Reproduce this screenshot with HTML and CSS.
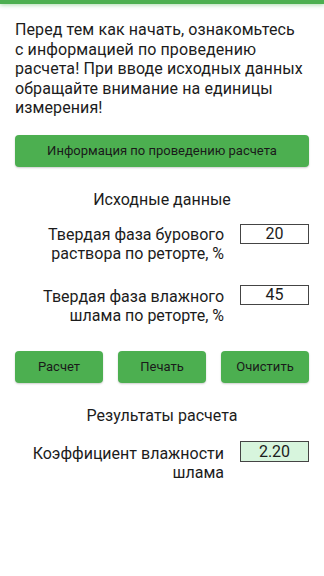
FILE: index.html
```html
<!DOCTYPE html>
<html>
<head>
    <title>Коэффициент влажности шлама</title>
    <link rel="stylesheet" href="styles.css">
</head>
<body>
    <div class="top-bar"></div>
    <div class="page">
        <p class="intro">Перед тем как начать, ознакомьтесь с информацией по проведению расчета! При вводе исходных данных обращайте внимание на единицы измерения!</p>

        <button class="btn btn-wide">Информация по проведению расчета</button>

        <h3 class="section-title">Исходные данные</h3>
        <div class="field-row">
            <label class="field-label" for="solidMud">Твердая фаза бурового раствора по реторте, %</label>
            <input id="solidMud" class="field-input" type="text" value="20">
        </div>
        <div class="field-row row-second">
            <label class="field-label" for="solidSlurry">Твердая фаза влажного шлама по реторте, %</label>
            <input id="solidSlurry" class="field-input" type="text" value="45">
        </div>

        <div class="actions">
            <button class="btn">Расчет</button>
            <button class="btn">Печать</button>
            <button class="btn">Очистить</button>
        </div>

        <h3 class="section-title results-title">Результаты расчета</h3>
        <div class="field-row result-row">
            <span class="field-label">Коэффициент влажности шлама</span>
            <span class="field-input result">2.20</span>
        </div>
    </div>
</body>
</html>
```

FILE: styles.css
```css
body {
    margin: 0;
    background-color: #ffffff;
    color: #1c1c1c;
    font-family: Roboto, "Noto Sans", sans-serif;
    font-size: 16px;
}
.top-bar {
    height: 4px;
    background-color: #4caf50;
    box-shadow: 0 1px 4px rgba(76,175,80,0.5);
}
.page {
    padding: 0 15px;
}
.intro {
    margin: 16px 0 0 0;
    padding-right: 3px;
    line-height: 19.5px;
    letter-spacing: 0.1px;
}
.btn {
    border: none;
    border-radius: 4px;
    background-color: #4caf50;
    color: #1a1a1a;
    font-family: Roboto, "Noto Sans", sans-serif;
    font-size: 13px;
    height: 32px;
    padding: 0;
    box-shadow: 0 1px 2px rgba(0,0,0,0.2);
    cursor: pointer;
}
.btn-wide {
    display: block;
    width: 100%;
    margin-top: 17px;
}
.section-title {
    font-weight: normal;
    font-size: 16px;
    line-height: 19px;
    text-align: center;
    margin: 23px 0 0 0;
}
.field-row {
    display: flex;
    align-items: flex-start;
    gap: 16px;
    margin-top: 15px;
}
.field-label {
    flex: 1;
    text-align: right;
    line-height: 19px;
    padding-top: 1px;
}
.field-input {
    box-sizing: border-box;
    width: 69px;
    height: 20px;
    border: 1px solid #444;
    border-radius: 0;
    padding: 0;
    font-family: Roboto, "Noto Sans", sans-serif;
    font-size: 16px;
    color: #1c1c1c;
    text-align: center;
    background: #ffffff;
    outline: none;
}
.row-second {
    margin-top: 22px;
}
.row-second .field-label {
    padding-top: 2px;
}
.actions {
    display: flex;
    justify-content: space-between;
    margin-top: 26px;
}
.actions .btn {
    width: 88px;
}
.results-title {
    margin-top: 23px;
}
.result-row {
    margin-top: 16px;
}
.result-row .field-label {
    padding-top: 3px;
}
.result {
    display: block;
    height: 21px;
    line-height: 19px;
    background-color: #d7f5dd;
}
```
